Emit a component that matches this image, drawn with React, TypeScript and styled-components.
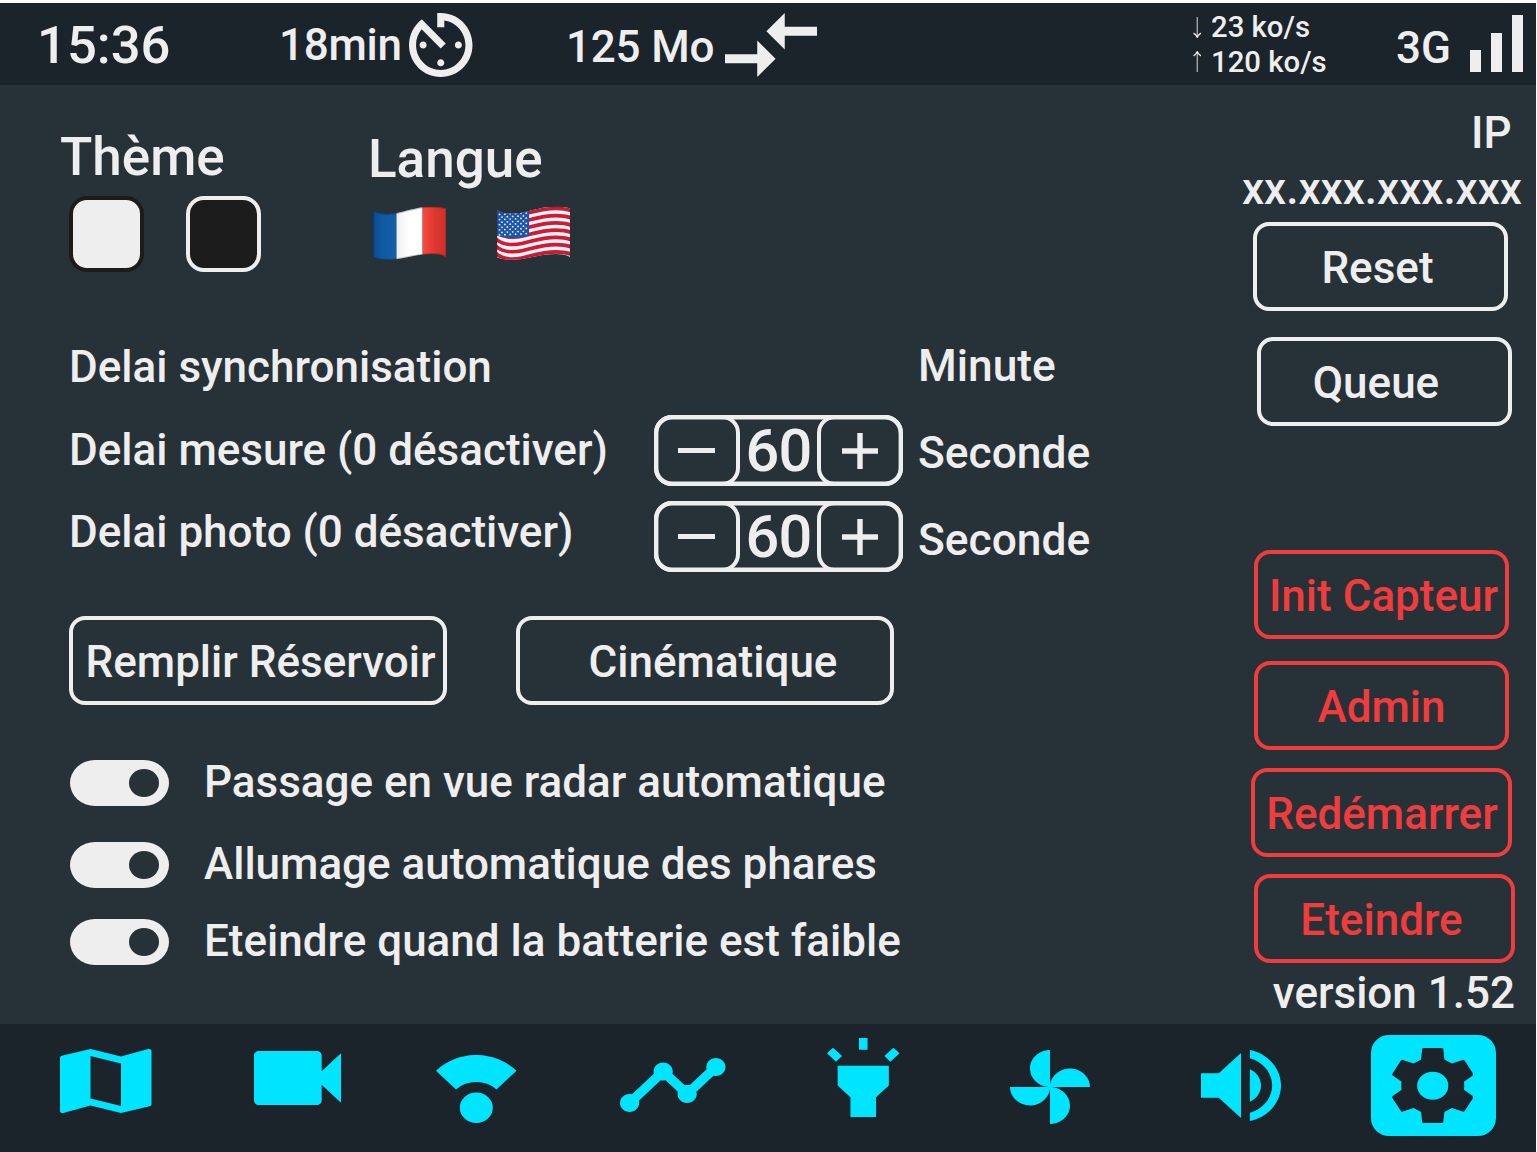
import React from "react";
import styled, { createGlobalStyle, css } from "styled-components";

const ink = "#eeeeee";
const danger = "#f03c3c";
const accent = "#00e5ff";
const surface = "#273238";
const chrome = "#1a242a";

const GlobalStyle = createGlobalStyle`
  * { box-sizing: border-box; }
  html, body { margin: 0; padding: 0; background: #ffffff; }
`;

const label = css`
  font-weight: 500;
  font-size: 44px;
  white-space: nowrap;
`;

const Screen = styled.div`
  width: 1536px;
  height: 1152px;
  padding-top: 3px;
  display: flex;
  flex-direction: column;
  overflow: hidden;
  background: #ffffff;
  color: ${ink};
  font-family: Roboto, "Liberation Sans", sans-serif;
`;

/* ---------- status bar ---------- */

const StatusBar = styled.header`
  height: 82px;
  flex: none;
  display: grid;
  grid-template-columns: 279px 287px 623px 207px auto;
  align-items: center;
  background: ${chrome};
`;

const Clock = styled.div`
  ${label}
  padding: 1px 0 0 37px;
  font-size: 52.6px;
`;

const Metric = styled.div<{ $gap: number }>`
  ${label}
  display: flex;
  align-items: center;
  gap: ${(p) => p.$gap}px;
  padding-top: 2px;
`;

const MetricText = styled.span<{ $drop?: number; $track?: number; $w: number }>`
  width: ${(p) => p.$w}px;
  padding-top: ${(p) => p.$drop ?? 0}px;
  letter-spacing: ${(p) => p.$track ?? 0}px;
`;

const Rates = styled.div`
  display: flex;
  flex-direction: column;
  font-size: 29.3px;
  font-weight: 500;
  line-height: 34.5px;
  padding-top: 1px;
`;

const Rate = styled.div`
  display: flex;
  align-items: center;
  gap: 10px;
  padding-left: 3.5px;
  white-space: nowrap;
`;

const Network = styled.div`
  ${label}
  display: flex;
  align-items: flex-end;
`;

const NetworkName = styled.span`
  width: 73.6px;
  line-height: 50px;
`;

const Bars = styled.div`
  display: flex;
  align-items: flex-end;
  gap: 10px;
  margin-bottom: 1px;
`;

const Bar = styled.div<{ $h: number }>`
  width: 11px;
  height: ${(p) => p.$h}px;
  background: ${ink};
`;

/* ---------- main ---------- */

const Main = styled.main`
  height: 939px;
  flex: none;
  display: flex;
  background: ${surface};
`;

const Settings = styled.section`
  width: 1237px;
  display: flex;
  flex-direction: column;
`;

const Preferences = styled.div`
  height: 237px;
  padding: 41px 0 0 60px;
  display: flex;
`;

const Preference = styled.div<{ $w: number; $drop?: number }>`
  width: ${(p) => p.$w}px;
  padding-top: ${(p) => p.$drop ?? 0}px;
`;

const PreferenceTitle = styled.h2`
  margin: 0;
  height: 62px;
  line-height: 62px;
  font-size: 53px;
  font-weight: 500;
`;

const Swatches = styled.div`
  display: flex;
  gap: 42px;
  padding: 8px 0 0 9px;
`;

const Swatch = styled.button<{ $fill: string; $edge: string }>`
  width: 75px;
  height: 75.5px;
  padding: 0;
  border: 4.4px solid ${(p) => p.$edge};
  border-radius: 18px;
  background: ${(p) => p.$fill};
`;

const Flags = styled.div`
  display: flex;
  gap: 50.5px;
  padding: 16px 0 0 4.5px;
`;

const Delays = styled.div`
  height: 294px;
  padding-left: 69px;
  display: flex;
  align-items: flex-start;
`;

const DelayLabels = styled.div`
  ${label}
  width: 585px;
  line-height: 82.5px;
  padding-top: 4px;
`;

const Steppers = styled.div`
  width: 264px;
  padding-top: 93px;
  display: flex;
  flex-direction: column;
  gap: 15px;
`;

const Units = styled.div`
  ${label}
  font-size: 44.3px;
  line-height: 87px;
  padding-top: 1px;
`;

const StepperFrame = styled.div`
  width: 249px;
  height: 71px;
  display: grid;
  grid-template: 71px / 86px 77px 86px;
  border-radius: 18px;
  box-shadow: inset 0 0 0 4.4px ${ink};
`;

const StepButton = styled.button<{ $inset?: number }>`
  display: flex;
  align-items: center;
  justify-content: center;
  padding: 0 ${(p) => p.$inset ?? 0}px 0 0;
  border: 4.4px solid ${ink};
  border-radius: 18px;
  background: none;
  color: ${ink};
`;

const StepValue = styled.output`
  text-align: center;
  font-size: 59.5px;
  font-weight: 500;
  letter-spacing: -0.8px;
  line-height: 72px;
`;

const Actions = styled.div`
  height: 89px;
  padding-left: 69px;
  display: flex;
  gap: 69px;
`;

const ActionButton = styled.button<{
  $w: number;
  $tone?: string;
  $right?: number;
  $top?: number;
  $shift?: number;
}>`
  ${label}
  width: ${(p) => p.$w}px;
  height: 89px;
  flex: none;
  margin: ${(p) => p.$top ?? 0}px ${(p) => p.$right ?? 0}px 0 0;
  padding: 2px ${(p) => Math.max(0, -(p.$shift ?? 0))}px 0 ${(p) => Math.max(0, p.$shift ?? 0)}px;
  border: 4.4px solid ${(p) => p.$tone ?? ink};
  border-radius: 16px;
  background: none;
  color: ${(p) => p.$tone ?? ink};
  font-family: inherit;
  text-align: center;
`;

const Toggles = styled.div`
  padding: 37px 0 0 70px;
`;

const ToggleRow = styled.label<{ $h: number }>`
  ${label}
  height: ${(p) => p.$h}px;
  display: grid;
  grid-template-columns: 134px auto;
  align-items: center;
`;

const Track = styled.span`
  width: 99px;
  height: 45.5px;
  margin-top: 2px;
  padding-right: 10px;
  display: flex;
  align-items: center;
  justify-content: flex-end;
  border-radius: 25px / 23px;
  background: ${ink};
`;

const Knob = styled.span`
  width: 30px;
  height: 28px;
  border-radius: 50%;
  background: ${surface};
`;

const Side = styled.aside`
  width: 299px;
  display: flex;
  flex-direction: column;
  align-items: flex-end;
`;

const SideText = styled.div<{ $top: number; $right: number }>`
  ${label}
  height: 54px;
  line-height: 54px;
  margin: ${(p) => p.$top}px ${(p) => p.$right}px 0 0;
`;

/* ---------- navigation ---------- */

const NavBar = styled.nav`
  height: 128px;
  flex: none;
  display: flex;
  align-items: flex-start;
  background: ${chrome};
`;

const NavItem = styled.button<{ $w: number; $left: number; $top: number }>`
  width: ${(p) => p.$w}px;
  flex: none;
  margin: ${(p) => p.$top}px 0 0 ${(p) => p.$left}px;
  padding: 0;
  border: 0;
  display: flex;
  background: none;
  color: ${accent};
`;

const NavTile = styled(NavItem)`
  height: 100.5px;
  padding: 0 2px 0 0;
  align-items: center;
  justify-content: center;
  border-radius: 18px;
  background: ${accent};
  color: ${chrome};
`;

type GlyphProps = { w: number; h: number; box: string; d: string };

const Glyph = ({ w, h, box, d }: GlyphProps) => (
  <svg width={w} height={h} viewBox={box} preserveAspectRatio="none" fill="currentColor">
    <path d={d} fillRule="evenodd" />
  </svg>
);

const timer =
  "M11 17c0 .55.45 1 1 1s1-.45 1-1-.45-1-1-1-1 .45-1 1zm0-14v4h2V5.08c3.39.49 6 3.39 6 6.92 0 3.87-3.13 7-7 7s-7-3.13-7-7c0-1.68.59-3.22 1.58-4.42L12 13l1.41-1.41-6.8-6.8v.02C4.42 6.45 3 9.05 3 12c0 4.97 4.02 9 9 9 4.97 0 9-4.03 9-9s-4.03-9-9-9h-1zm7 9c0-.55-.45-1-1-1s-1 .45-1 1 .45 1 1 1 1-.45 1-1zM6 12c0 .55.45 1 1 1s1-.45 1-1-.45-1-1-1-1 .45-1 1z";
const transfer =
  "M9.01 14H2v2h7.01v3L13 15l-3.99-4v3zm5.98-1v-3H22V8h-7.01V5L11 9l3.99 4z";
const map =
  "M20.5 3l-.16.03L15 5.1 9 3 3.36 4.9c-.21.07-.36.25-.36.48V20.5c0 .28.22.5.5.5l.16-.03L9 18.9l6 2.1 5.64-1.9c.21-.07.36-.25.36-.48V3.5c0-.28-.22-.5-.5-.5zM15 19l-6-2.11V5l6 2.11V19z";
const camera =
  "M17 10.5V7c0-.55-.45-1-1-1H4c-.55 0-1 .45-1 1v10c0 .55.45 1 1 1h12c.55 0 1-.45 1-1v-3.5l4 4v-11l-4 4z";
const radar =
  "M0 15.7A59.4 59.4 0 0 1 80.5 15.7L60.5 34.5A30.8 30.8 0 0 0 20 34.5ZM40.3 37.6a16.5 15.2 0 1 1 0 30.4a16.5 15.2 0 1 1 0-30.4z";
const timeline =
  "M23 8c0 1.1-.9 2-2 2-.18 0-.35-.02-.51-.07l-3.56 3.55c.05.16.07.34.07.52 0 1.1-.9 2-2 2s-2-.9-2-2c0-.18.02-.36.07-.52l-2.55-2.55c-.16.05-.34.07-.52.07s-.36-.02-.52-.07l-4.55 4.56c.05.16.07.33.07.51 0 1.1-.9 2-2 2s-2-.9-2-2 .9-2 2-2c.18 0 .35.02.51.07l4.56-4.55C8.02 9.36 8 9.18 8 9c0-1.1.9-2 2-2s2 .9 2 2c0 .18-.02.36-.07.52l2.55 2.55c.16-.05.34-.07.52-.07s.36.02.52.07l3.55-3.56C19.02 8.35 19 8.18 19 8c0-1.1.9-2 2-2s2 .9 2 2z";
const torch =
  "M6 14l3 3v5h6v-5l3-3V9H6zm5-12h2v3h-2zM3.5 5.875L4.914 4.46l2.12 2.122L5.62 7.997zm13.46.71l2.123-2.12 1.414 1.414L18.375 8z";
const fan =
  "M12 12c0-3 2.5-5.5 5.5-5.5S23 9 23 12H12zm0 0c0 3-2.5 5.5-5.5 5.5S1 15 1 12h11zm0 0c-3 0-5.5-2.5-5.5-5.5S9 1 12 1v11zm0 0c3 0 5.5 2.5 5.5 5.5S15 23 12 23V12z";
const volume =
  "M3 9v6h4l5 5V4L7 9H3zm13.5 3c0-1.77-1.02-3.29-2.5-4.03v8.05c1.48-.73 2.5-2.25 2.5-4.02zM14 3.23v2.06c2.89.86 5 3.54 5 6.71s-2.11 5.85-5 6.71v2.06c4.01-.91 7-4.49 7-8.77s-2.99-7.86-7-8.77z";
const gear =
  "M92 0H146Q150 0 150 4L153 35L175 47L206 36Q210 35 212 38L237 78Q239 81 236 83L210 102Q212 114 210 126L236 145Q239 148 237 151L212 190Q210 194 206 192L175 181L153 193L150 223Q149 227 145 227H93Q89 227 88 223L85 193L63 181L32 192Q28 194 26 190L1 151Q-1 148 2 145L28 126Q26 114 28 102L2 83Q-1 81 1 78L26 38Q28 35 32 36L63 47L85 35L88 4Q88 0 92 0ZM119 71.5A45.5 42.5 0 1 0 119 156.5A45.5 42.5 0 1 0 119 71.5Z";

const RateArrow = ({ up }: { up?: boolean }) => (
  <svg width="8.5" height="21" viewBox="0 0 8.5 21" fill="none" stroke={ink}>
    <g transform={up ? "translate(0 21) scale(1 -1)" : undefined}>
      <path d="M4.25 0V20" strokeWidth="1.2" strokeOpacity="0.75" />
      <path d="M0.6 16.2Q3.2 17.8 4.25 20.2Q5.3 17.8 7.9 16.2" strokeWidth="1.4" />
    </g>
  </svg>
);

const flagShape =
  "M0 12C15 24 45 26 70 20C105 11 130 2 165 2C185 2 198 4 206 8V152C198 146 185 142 165 142C130 142 105 151 70 157C45 161 15 160 0 152Z";

const FranceFlag = () => (
  <svg width="73.5" height="54" viewBox="0 0 206 160" preserveAspectRatio="none">
    <defs>
      <clipPath id="fr-clip">
        <path d={flagShape} />
      </clipPath>
      <linearGradient id="fr-blue">
        <stop offset="0" stopColor="#0b4a8e" />
        <stop offset="0.35" stopColor="#0f58a2" />
        <stop offset="1" stopColor="#1660ab" />
      </linearGradient>
      <linearGradient id="fr-white">
        <stop offset="0" stopColor="#efeff0" />
        <stop offset="0.5" stopColor="#ffffff" />
        <stop offset="1" stopColor="#ffffff" />
      </linearGradient>
      <linearGradient id="fr-red">
        <stop offset="0" stopColor="#fb4a42" />
        <stop offset="0.5" stopColor="#dc382f" />
        <stop offset="1" stopColor="#cd2f28" />
      </linearGradient>
    </defs>
    <g clipPath="url(#fr-clip)">
      <rect width="67" height="160" fill="url(#fr-blue)" />
      <rect x="66" width="73" height="160" fill="url(#fr-white)" />
      <rect x="139" width="67" height="160" fill="url(#fr-red)" />
      <path d={flagShape} fill="none" stroke="#000" strokeOpacity="0.22" strokeWidth="6" />
    </g>
  </svg>
);

const wave = "M-4 6C15 24 45 26 70 20C105 11 130 2 165 2C185 2 198 4 210 10";

const UsaFlag = () => (
  <svg width="73.5" height="54" viewBox="0 0 206 160" preserveAspectRatio="none">
    <defs>
      <clipPath id="us-clip">
        <path d={flagShape} />
      </clipPath>
    </defs>
    <g clipPath="url(#us-clip)">
      <rect width="206" height="160" fill="#f6f6f8" />
      {[0, 2, 4, 6, 8, 10, 12].map((i) => (
        <path
          key={i}
          d={wave}
          transform={`translate(0 ${5 + i * 10.75})`}
          fill="none"
          stroke="#d01a35"
          strokeWidth="11"
        />
      ))}
      <path d="M0 8C15 22 45 24 90 14V88C60 98 20 96 0 88Z" fill="#1d56a6" />
      {[0, 1, 2, 3, 4, 5, 6, 7, 8].map((r) =>
        Array.from({ length: r % 2 ? 5 : 6 }, (_, c) => (
          <circle
            key={`${r}-${c}`}
            cx={(r % 2 ? 14 : 7) + c * 15}
            cy={25 + r * 7.6 - c * 0.8}
            r="2.6"
            fill="#e6eefa"
          />
        ))
      )}
      <path d={flagShape} fill="none" stroke="#000" strokeOpacity="0.15" strokeWidth="5" />
    </g>
  </svg>
);

const Stepper = ({ value }: { value: number }) => (
  <StepperFrame>
    <StepButton $inset={2}>
      <Glyph w={37} h={5.5} box="0 0 37 5" d="M0 0H37V5H0Z" />
    </StepButton>
    <StepValue>{value}</StepValue>
    <StepButton>
      <Glyph w={36} h={36} box="0 0 36 36" d="M15.3 0h5.4v15.3H36v5.4H20.7V36h-5.4V20.7H0v-5.4h15.3z" />
    </StepButton>
  </StepperFrame>
);

const Toggle = ({ text, h }: { text: string; h: number }) => (
  <ToggleRow $h={h}>
    <Track>
      <Knob />
    </Track>
    <span>{text}</span>
  </ToggleRow>
);

export default function App() {
  return (
    <>
      <GlobalStyle />
      <Screen>
        <StatusBar>
          <Clock>15:36</Clock>
          <Metric $gap={9}>
            <MetricText $w={121} $track={-0.25}>18min</MetricText>
            <Glyph w={63.5} h={64} box="3 3 18 18" d={timer} />
          </Metric>
          <Metric $gap={9}>
            <MetricText $w={149.5} $drop={4} $track={-0.2}>125 Mo</MetricText>
            <Glyph w={92} h={64} box="2 5 20 14" d={transfer} />
          </Metric>
          <Rates>
            <Rate>
              <RateArrow />
              <span>23 ko/s</span>
            </Rate>
            <Rate>
              <RateArrow up />
              <span>120 ko/s</span>
            </Rate>
          </Rates>
          <Network>
            <NetworkName>3G</NetworkName>
            <Bars>
              <Bar $h={22} />
              <Bar $h={39} />
              <Bar $h={57} />
            </Bars>
          </Network>
        </StatusBar>

        <Main>
          <Settings>
            <Preferences>
              <Preference $w={308}>
                <PreferenceTitle>Thème</PreferenceTitle>
                <Swatches>
                  <Swatch $fill="#eeeeee" $edge="#1c1c1c" />
                  <Swatch $fill="#1c1c1c" $edge="#eeeeee" />
                </Swatches>
              </Preference>
              <Preference $w={300} $drop={2}>
                <PreferenceTitle>Langue</PreferenceTitle>
                <Flags>
                  <FranceFlag />
                  <UsaFlag />
                </Flags>
              </Preference>
            </Preferences>

            <Delays>
              <DelayLabels>
                <div>Delai synchronisation</div>
                <div>Delai mesure (0 désactiver)</div>
                <div>Delai photo (0 désactiver)</div>
              </DelayLabels>
              <Steppers>
                <Stepper value={60} />
                <Stepper value={60} />
              </Steppers>
              <Units>
                <div>Minute</div>
                <div>Seconde</div>
                <div>Seconde</div>
              </Units>
            </Delays>

            <Actions>
              <ActionButton $w={378} $shift={5}>Remplir Réservoir</ActionButton>
              <ActionButton $w={378} $shift={16}>Cinématique</ActionButton>
            </Actions>

            <Toggles>
              <Toggle text="Passage en vue radar automatique" h={80} />
              <Toggle text="Allumage automatique des phares" h={84} />
              <Toggle text="Eteindre quand la batterie est faible" h={70} />
            </Toggles>
          </Settings>

          <Side>
            <SideText $top={21} $right={24.5}>IP</SideText>
            <SideText $top={2} $right={14}>xx.xxx.xxx.xxx</SideText>
            <ActionButton $w={255} $top={6} $right={28.5} $shift={-5}>Reset</ActionButton>
            <ActionButton $w={255} $top={26} $right={24} $shift={-17}>Queue</ActionButton>
            <ActionButton $w={255} $top={124} $right={27} $tone={danger} $shift={4}>Init Capteur</ActionButton>
            <ActionButton $w={255} $top={22} $right={27} $tone={danger}>Admin</ActionButton>
            <ActionButton $w={261} $top={18} $right={24} $tone={danger} $shift={1}>Redémarrer</ActionButton>
            <ActionButton $w={261} $top={17} $right={21} $tone={danger} $shift={-6}>Eteindre</ActionButton>
            <SideText $top={3} $right={21}>version 1.52</SideText>
          </Side>
        </Main>

        <NavBar>
          <NavItem $w={92} $left={60} $top={25}>
            <Glyph w={91.5} h={64} box="3 3 18 18" d={map} />
          </NavItem>
          <NavItem $w={87} $left={102} $top={27}>
            <Glyph w={87} h={54} box="3 6 18 12" d={camera} />
          </NavItem>
          <NavItem $w={81} $left={95} $top={31}>
            <Glyph w={80.5} h={68} box="0 0 80.5 68" d={radar} />
          </NavItem>
          <NavItem $w={106} $left={103} $top={34}>
            <Glyph w={105.5} h={54} box="1 6 22 12" d={timeline} />
          </NavItem>
          <NavItem $w={73} $left={101} $top={14}>
            <Glyph w={72.5} h={79} box="3.5 2 17 20" d={torch} />
          </NavItem>
          <NavItem $w={80} $left={110} $top={26}>
            <Glyph w={80} h={74} box="1 1 22 22" d={fan} />
          </NavItem>
          <NavItem $w={80} $left={111} $top={26}>
            <Glyph w={80} h={71} box="3 3.23 18 17.54" d={volume} />
          </NavItem>
          <NavTile $w={124.5} $left={90} $top={11}>
            <Glyph w={81.5} h={75.5} box="0 0 238 228" d={gear} />
          </NavTile>
        </NavBar>
      </Screen>
    </>
  );
}
